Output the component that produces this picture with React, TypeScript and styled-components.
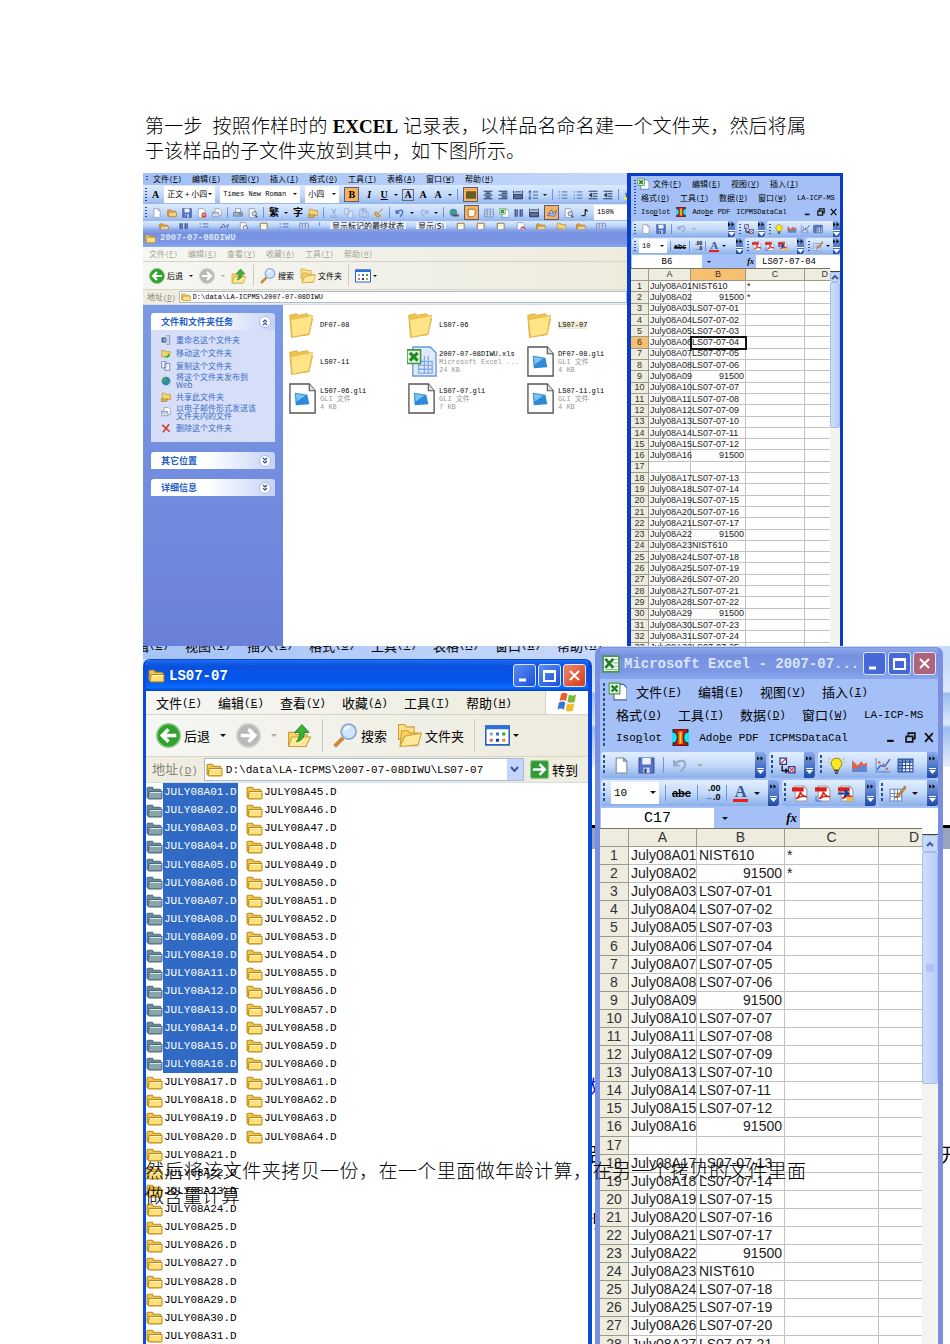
import React from "react";
import styled, { createGlobalStyle, css, ThemeProvider } from "styled-components";

const CJK = `"Noto Sans CJK SC", sans-serif`;
const MONO = `"Liberation Mono", "Noto Sans CJK SC", monospace`;
const SANS = `"Liberation Sans", "Noto Sans CJK SC", sans-serif`;

const small = {
  text: 8, mono: 7, item: 39, icon: 10, gap: 5, tightGap: 3, grip: 3, arrow: 2,
  title: 18, titleText: 9, menu: 15, bar: 28, address: 15, navIcon: 16, sheetMenu: 14,
  toolRow: 16, more: 7, formula: 13, nameBox: 70, nameText: 9, cell: 9, line: 9,
  head: 12, table: 386, cols: [18, 42, 55, 59], scroll: 10, thumb: 146, pad: 2, cellPad: 1,
};
const large = {
  text: 13, mono: 11, item: 62, icon: 17, gap: 8, tightGap: 6, grip: 5, arrow: 3,
  title: 31, titleText: 14, menu: 24, bar: 42, address: 26, navIcon: 25, sheetMenu: 23,
  toolRow: 26, more: 11, formula: 20, nameBox: 113, nameText: 15, cell: 14, line: 15,
  head: 18, table: 526, cols: [29, 68, 88, 94], scroll: 16, thumb: 232, pad: 3, cellPad: 2,
};
type Size = typeof small;
type T = { theme: any };
const px = (key: keyof Size) => ({ theme }: T) => `${theme[key]}px`;

const Global = createGlobalStyle`
  * { box-sizing: border-box; }
  body { margin: 0; background: #fff; color: #000; }
  button, input, select { font: inherit; color: inherit; margin: 0; padding: 0; border: 0; background: none; border-radius: 0; }
  button { display: flex; align-items: center; flex: none; white-space: nowrap; }
  svg { display: block; flex: none; }
`;

/* ---------- icons ---------- */

const folderShape = (a: string, b: string, line: string) => (
  <>
    <path d="M1 4q0-1 1-1h4l1 2h6q1 0 1 1v7H2q-1 0-1-1z" fill={a} stroke={line} />
    <path d="M3 7h12v6q0 1-1 1H3q-1 0-1-1z" fill={b} stroke={line} />
    <path d="M3.500 8h11" stroke="#fff" opacity=".7" />
  </>
);
const pdf = (extra: React.ReactNode) => (
  <>
    <path d="M3 1h8l3 3v11H3z" fill="#fff" stroke="#999" />
    <path d="M0 2h11v4H0z" fill="#d8201c" />
    <path d="M4 13c3-2 4-6 4-7 0 3 3 5 6 5-4-1-7 0-10 2z" fill="none" stroke="#d8201c" strokeWidth="1.500" />
    {extra}
  </>
);

const icons: Record<string, React.ReactNode> = {
  folder: folderShape("#f0c650", "#ffe07a", "#b98a18"),
  folderSel: folderShape("#6f8c94", "#8aa5a8", "#4a6b86"),
  bigFolder: (
    <>
      <path d="M1 2.500l4-1 1 1 5-1 1 1v2l2 0-2 9-10 1.500z" fill="#f0c44c" stroke="#d8a838" strokeWidth=".5" />
      <path d="M1.500 5l12.500-2.500-2 10.500-9.500 2z" fill="#ffe488" stroke="#e8b848" strokeWidth=".5" />
    </>
  ),
  gli: (
    <>
      <path d="M1 .5h10l3 3.500v11.500H1z" fill="#fff" stroke="#555" strokeWidth=".7" />
      <path d="M11 .5v3.500h3" fill="#ddd" stroke="#555" strokeWidth=".6" />
      <path d="M3.500 5l6.500 1 1 5-7 .5z" fill="#2e8ad8" /><path d="M4 5.500l5 1-4.500 3z" fill="#7cc3f5" />
    </>
  ),
  xlsFile: (
    <>
      <path d="M3 .5h9l3 3v12H3z" fill="#dfeafc" stroke="#6f95d8" strokeWidth=".7" />
      <path d="M6 8h7v6H6zM6 10h7M6 12h7M9 5v9M11 5v9" fill="none" stroke="#86a8e4" strokeWidth=".7" />
      <path d="M0 2h7v7H0z" fill="#e5f4e2" stroke="#3c9a3c" strokeWidth=".8" />
      <path d="M1.500 3.500l4 4M5.500 3.500l-4 4" stroke="#1f8a2a" strokeWidth="1.600" />
    </>
  ),
  excel: (
    <>
      <path d="M1 1h14v14H1z" fill="#f4fbf2" stroke="#4b9a4b" strokeWidth="1.500" />
      <path d="M10 4h4M10 7h4M10 10h4M3 13h11" stroke="#8ac48a" />
      <path d="M3 3.500l7 8M10 3.500l-7 8" stroke="#1f7f2c" strokeWidth="2.500" />
    </>
  ),
  book: (
    <>
      <path d="M5 2h8l3 3v10H5z" fill="#fff" stroke="#4a68a8" />
      <path d="M1 1h9v9H1z" fill="#e5f5e0" stroke="#4b9a4b" />
      <path d="M3 3l5 5M8 3L3 8" stroke="#1f7f2c" strokeWidth="2" />
    </>
  ),
  back: (
    <>
      <circle cx="8" cy="8" r="7.500" fill="#2fa32c" stroke="#8fc98a" />
      <path d="M13 8H4.500M8 4L4 8l4 4" fill="none" stroke="#fff" strokeWidth="2.200" />
    </>
  ),
  forward: (
    <>
      <circle cx="8" cy="8" r="7.500" fill="#b9b9b6" stroke="#d4d4d0" />
      <path d="M3 8h8.500M8 4l4 4-4 4" fill="none" stroke="#fff" strokeWidth="2.200" />
    </>
  ),
  up: (
    <>
      <path d="M1 6h4l1 1.500h7l-1 7.500H1z" fill="#f6d56c" stroke="#cf9f35" strokeWidth=".7" />
      <path d="M3 9h12l-3 6H1z" fill="#ffeaa0" stroke="#cf9f35" strokeWidth=".7" />
      <path d="M6 12c4-1 5-3 5-6h3L9.500 1 5 6h3c0 3-.5 4-2 6z" fill="#3ab235" stroke="#1f7f1f" strokeWidth=".6" />
    </>
  ),
  search: (
    <>
      <path d="M6.500 9.500L1 15" stroke="#c98a3c" strokeWidth="2.500" />
      <circle cx="10" cy="5.500" r="4.800" fill="#cfe5fb" stroke="#8fa9cf" strokeWidth="1.200" />
      <path d="M7.500 4.500q1-2 3-2" stroke="#fff" strokeWidth="1.300" fill="none" />
    </>
  ),
  folders: (
    <>
      <path d="M1 1h4l1 1.500h5v8H1z" fill="#fbe08a" stroke="#cf9f35" strokeWidth=".7" />
      <path d="M3 5h4l1 1.500h6l-1 8H2z" fill="#f6d060" stroke="#cf9f35" strokeWidth=".7" />
      <path d="M5 8.500l10.500-2-2 7.500L2 15z" fill="#ffeaa0" stroke="#cf9f35" strokeWidth=".7" />
    </>
  ),
  views: (
    <>
      <path d="M.5 2h15v12H.5z" fill="#fff" stroke="#2a62c0" />
      <path d="M0 1.500h16v2.500H0z" fill="#2f6fd8" />
      <path d="M3 6h2v2H3z" fill="#8fa8d8" /><path d="M7 6h2v2H7z" fill="#3a6fd0" /><path d="M11 6h2v2h-2z" fill="#3aa03a" />
      <path d="M3 10h2v2H3z" fill="#e06a6a" /><path d="M7 10h2v2H7z" fill="#203a90" /><path d="M11 10h2v2h-2z" fill="#c8983a" />
    </>
  ),
  go: (
    <>
      <rect x=".5" y=".5" width="15" height="15" rx="1.500" fill="#2f9a35" stroke="#8cc68c" />
      <path d="M2.500 8H12M8 3.500L12.500 8 8 12.500" fill="none" stroke="#fff" strokeWidth="2" />
    </>
  ),
  flag: (
    <>
      <path d="M3.500 2q2-1.500 4.500 0L7 7q-2.500-1.500-4.500 0z" fill="#e8602c" />
      <path d="M9 2.500q2.500 1.500 5 0L13 7.500q-2.500 1.500-5 0z" fill="#7cb83c" />
      <path d="M2 8q2.500-1.500 4.500 0l-1 5q-2.500-1.500-4.500 0z" fill="#3a78d8" />
      <path d="M7.700 8.500q2.500 1.500 5 0l-1 5q-2.500 1.500-5 0z" fill="#f2bc2c" />
    </>
  ),
  blank: <path d="M3 1h7l3 3v11H3zM10 1v3h3" fill="#fff" stroke="#7b86a0" />,
  open: folderShape("#e8a83c", "#f8cf72", "#a86c18"),
  save: (
    <>
      <path d="M1 1h14v14H1z" fill="#5572c4" stroke="#3a4f98" />
      <path d="M4 1h8v6H4z" fill="#eef3ff" /><path d="M5 10h6v5H5z" fill="#c9d3f0" /><path d="M6 11h2v4H6z" fill="#2c3f80" />
    </>
  ),
  perm: (
    <>
      <path d="M2 1h8l3 3v11H2z" fill="#fff" stroke="#7b86a0" /><circle cx="11" cy="11" r="4" fill="#d8403c" />
      <path d="M9 11h4" stroke="#fff" strokeWidth="1.500" />
    </>
  ),
  mail: (
    <>
      <path d="M5 1h7l3 3v8H5z" fill="#fff" stroke="#7b86a0" /><path d="M1 7h10v7H1z" fill="#e8ecf8" stroke="#6a7898" />
      <path d="M1 7l5 4 5-4" fill="none" stroke="#6a7898" />
    </>
  ),
  print: (
    <>
      <path d="M4 1h8v6H4z" fill="#fff" stroke="#6a7898" /><path d="M1 7h14v6H1z" fill="#a9b3cc" stroke="#55617f" />
      <path d="M9 10h4" stroke="#2fa32c" strokeWidth="2" />
    </>
  ),
  preview: (
    <>
      <path d="M2 1h8l2 3v11H2z" fill="#fff" stroke="#6a7898" /><circle cx="10" cy="9" r="3.500" fill="#cde" stroke="#445" />
      <path d="M12 12l3 3" stroke="#445" strokeWidth="2" />
    </>
  ),
  cut: <path d="M5 1l4 9M11 1L7 10M5 12a2 2 0 1 0 .1 0M11 12a2 2 0 1 0 .1 0" fill="none" stroke="#8fa5d0" strokeWidth="1.500" />,
  copyOff: <path d="M1 1h7v9H1zM6 5h8v10H6z" fill="#d4e2fa" stroke="#8fa5d0" />,
  copy: <path d="M1 1h7v10H1zM6 4h8v11H6z" fill="#f4f8ff" stroke="#3c5c9c" />,
  paste: <path d="M1 2h11v12H1zM6 6h9v9H6zM4 1h5v3H4z" fill="#c2d2f0" stroke="#8fa5d0" />,
  brush: <path d="M14 1L8 7M3 6l7 6-4 3-5-5z" fill="#e8b84c" stroke="#a87828" strokeWidth="1.500" />,
  highlight: <><path d="M0 11h16v5H0z" fill="#f8ec20" /><path d="M13 1L7 8M3 5l6 5-5 1z" fill="#eef" stroke="#334" strokeWidth="1.500" /></>,
  undo: <path d="M2 3v5h5M2.500 7.500C5 3 12 2 12.500 6.500 12.700 10 9 12 8 14" fill="none" stroke="#3a66c4" strokeWidth="2" />,
  undoOff: <path d="M2 3v5h5M2.500 7.500C5 3 12 2 12.500 6.500 12.700 10 9 12 8 14" fill="none" stroke="#9aa8c8" strokeWidth="2" />,
  redoOff: <path d="M14 3v5H9M13.500 7.500C11 3 4 2 3.500 6.500 3.300 10 7 12 8 14" fill="none" stroke="#9ab0dc" strokeWidth="2" />,
  globe: (
    <>
      <circle cx="7" cy="7" r="6" fill="#3c88c8" /><path d="M3 4q4-3 5 0t-2 5-3-1zM9 8l4-1-2 4z" fill="#49a848" />
      <path d="M7 12h8" stroke="#556" strokeWidth="3" strokeLinecap="round" />
    </>
  ),
  world: (
    <>
      <circle cx="8" cy="8" r="7" fill="#2f80c0" />
      <path d="M3 4q5-4 6 0t-3 5-3-1zM9 9l5-1-3 5z" fill="#49a848" />
    </>
  ),
  grid: <path d="M1 2h14v12H1zM1 5h14M1 8h14M1 11h14M5 2v12M10 2v12" fill="#fff" stroke="#4a6cb4" />,
  columns: <path d="M2 2v12M5 2v12M10 2v12M13 2v12" stroke="#445f96" strokeWidth="2.500" />,
  note: <path d="M10 2v9M10 2l4 3M4 12h6" stroke="#222" strokeWidth="2" />,
  draw: <path d="M1 12L7 3l3 5 5-4-3 9zM3 9h8" fill="#c8d8f8" stroke="#4a55a8" strokeWidth="1.300" />,
  page: <path d="M2 2h11v8l-3 4H2z" fill="#fff8e0" stroke="#86622a" strokeWidth="1.300" />,
  justify: <path d="M0 2h16v12H0z" fill="#6a5a24" />,
  center: <path d="M1 2h14M4 5h8M1 8h14M4 11h8M1 14h14" stroke="#22345c" strokeWidth="1.800" />,
  right: <path d="M1 2h14M6 5h9M1 8h14M6 11h9M1 14h14" stroke="#22345c" strokeWidth="1.800" />,
  spread: <path d="M1 1v5M15 1v5M3 3h10M1 7h14v7H1z" fill="#5a6c98" stroke="#22345c" strokeWidth="1.500" />,
  spacing: <path d="M3 1v14M1 4l2-3 2 3M1 12l2 3 2-3M8 3h8M8 8h8M8 13h8" fill="none" stroke="#3a5c9c" strokeWidth="1.500" />,
  list: <path d="M1 3h2M1 8h2M1 13h2M6 3h9M6 8h9M6 13h9" stroke="#4a6cb4" strokeWidth="1.500" />,
  indent: <path d="M1 2h14M8 6h7M8 10h7M1 14h14M6 5L2 8l4 3z" fill="#22345c" stroke="#22345c" strokeWidth="1.500" />,
  pdf1: pdf(null),
  pdf2: pdf(<path d="M1 10v5h5" fill="none" stroke="#3a7ad8" />),
  pdf3: pdf(<><path d="M0 8h8M6 5l4 3-4 3" stroke="#203a98" strokeWidth="2" fill="none" /><path d="M8 11h6v4H8z" fill="#f0b848" /></>),
  shapes: (
    <>
      <path d="M1 1h6v6H1zM9 9h6v6H9z" fill="#fff" stroke="#203a90" strokeWidth="1.200" />
      <path d="M1 7l6-6M9 9l6 6M15 9l-6 6" stroke="#d02840" /><path d="M3 8v5h5M6 11l2 2-2 2" fill="none" stroke="#111" strokeWidth="1.300" />
    </>
  ),
  bulb: (
    <>
      <path d="M8 1a5 5 0 0 1 3 9l-.5 2h-5L5 10a5 5 0 0 1 3-9z" fill="#ffe81c" stroke="#8a7410" strokeWidth=".8" />
      <path d="M6 13h4M6.500 15h3" stroke="#334" strokeWidth="1.500" /><path d="M0 5h1M15 5h1M1 1l1 1M15 1l-1 1" stroke="#b89818" />
    </>
  ),
  area: (
    <>
      <path d="M1 14V8l4 2 5-4 5 3v5z" fill="#5a88d8" /><path d="M1 10V3l5 5 4-4 2 3 3-2v4l-5-1-5 4z" fill="#e0604c" />
    </>
  ),
  plot: (
    <>
      <path d="M2 1v13h13" fill="none" stroke="#6a8cc8" /><path d="M3 12l3-4 4 1 5-7" fill="none" stroke="#3a66c4" strokeWidth="1.300" />
      <path d="M4 4h2v2H4zM8 6h2v2H8zM11 10h2v2h-2z" fill="#d85048" />
    </>
  ),
  cells: (
    <>
      <path d="M1 2h14v12H1z" fill="#f4f8ff" /><path d="M1 2h14v3H1zM1 5h4v9H1z" fill="#6f94dc" />
      <path d="M1 2h14v12H1zM1 5h14M1 8h14M1 11h14M5 2v12M8 2v12M12 2v12" fill="none" stroke="#2c4f9c" />
    </>
  ),
  edit: (
    <>
      <path d="M1 4h11v11H1zM1 8h11M1 11h11M5 4v11M8 4v11" fill="#fff" stroke="#6a88c0" />
      <path d="M15 1L8 9l-2 3 3-1 7-8z" fill="#d89848" stroke="#8a5a20" strokeWidth=".8" />
    </>
  ),
  isoplot: (
    <>
      <path d="M0 0h16v16H0z" fill="#1ce4f0" />
      <path d="M1 0h14v3h-2q-2 2-2 5t2 5h2v3H1v-3h2q2-2 2-5T3 3H1z" fill="#c01818" stroke="#111" strokeWidth=".8" />
      <path d="M6 2h4v12H6z" fill="#f08020" /><path d="M7.500 3h1v10h-1z" fill="#ffe820" />
    </>
  ),
  rename: <><path d="M1 4h7v8H1z" fill="#445878" /><path d="M9 1h5v14H9" fill="#c4d2ea" stroke="#6a7898" /><path d="M3 6h7v4H3z" fill="#88a8e0" /></>,
  move: <><path d="M1 4h5l1 2h8l-2 8H1z" fill="#f6d56c" stroke="#b08828" /><path d="M5 13l6-1V8l4 4-5 4z" fill="#3ab235" /></>,
  share: <><path d="M2 2h5l1 2h7v8H2z" fill="#f6d56c" stroke="#b08828" /><path d="M0 11h11l-2 4H0z" fill="#e8b848" stroke="#8a6a3a" /></>,
  remove: <path d="M2 3l12 11M13 2L3 15" stroke="#d03a30" strokeWidth="2.600" />,
};

const Icon = ({ name, size }: { name: string; size: number }) => (
  <svg width={size} height={size} viewBox="0 0 16 16" aria-hidden="true">{icons[name]}</svg>
);

/* ---------- shared small parts ---------- */

const Mono = styled.span`
  font: ${px("mono")} ${MONO};
  white-space: nowrap;
`;
const Grip = styled.i`
  flex: none;
  width: 2px;
  align-self: stretch;
  margin: 3px 0 3px 2px;
  background: repeating-linear-gradient(#2c4f96 0 ${({ theme }) => (theme.grip > 3 ? 3 : 1)}px, transparent 0 ${px("grip")});
`;
const Arrow = styled.i<{ $off?: boolean }>`
  flex: none;
  border: ${px("arrow")} solid transparent;
  border-top-color: ${(p) => (p.$off ? "#a8aaac" : "#111")};
  border-bottom: 0;
`;
const Rule = styled.i<{ $tall?: boolean }>`
  flex: none;
  width: 1px;
  height: ${(p) => (p.$tall ? "80%" : "60%")};
  background: ${(p) => (p.$tall ? "#cfccbc" : "#6f94d4")};
`;
const MenuEntry = styled.button<{ $auto?: boolean }>`
  width: ${({ theme, $auto }) => ($auto ? "auto" : `${theme.item}px`)};
  font: ${px("text")} ${CJK};
  line-height: 1;
`;
const Entry = ({ label, k }: { label: string; k: string }) => (
  <MenuEntry>{label}<Mono>(<u>{k}</u>)</Mono></MenuEntry>
);
const Tool = styled.button<{ $on?: boolean }>`
  justify-content: center;
  ${(p) => p.$on && css`
    width: 15px; height: 15px; background: #f6b35c; outline: 1px solid #5a5a80; outline-offset: -1px;
  `}
`;

/* ---------- window chrome ---------- */

const TitleBar = styled.div<{ $active?: boolean }>`
  display: flex;
  align-items: center;
  flex: none;
  gap: 2px;
  height: ${px("title")};
  padding: 0 2px;
  color: ${(p) => (p.$active ? "#fff" : "#dbe5fc")};
  background: ${(p) => p.$active
    ? "linear-gradient(#1c6cf0, #0a50dc 20%, #0458ee 70%, #0a6cff 88%, #0344c8)"
    : "linear-gradient(#8fa8ec, #7690e0 25%, #7c98e4 75%, #88a6f0)"};
`;
const Title = styled.h2`
  flex: 1;
  min-width: 0;
  margin: 0 0 0 2px;
  overflow: hidden;
  white-space: nowrap;
  font: bold ${px("titleText")} ${MONO};
`;
const ControlButton = styled.button<{ $tone: string }>`
  width: 23px;
  height: 23px;
  justify-content: center;
  border: 1px solid #dce6fc;
  border-radius: 3px;
  background: ${(p) => p.$tone};
`;
const Controls = ({ dim }: { dim?: boolean }) => {
  const blue = dim ? "#4668d8" : "linear-gradient(135deg,#5c8cf4,#1c50d8)";
  return (
    <>
      <ControlButton $tone={blue} aria-label="最小化"><svg width="15" height="15"><path d="M2 12h7" stroke="#fff" strokeWidth="3" /></svg></ControlButton>
      <ControlButton $tone={blue} aria-label="最大化"><svg width="15" height="15"><path d="M2 3h11v10H2z M2 4h11" fill="none" stroke="#fff" strokeWidth="2" /></svg></ControlButton>
      <ControlButton $tone={dim ? "#b0647c" : "linear-gradient(135deg,#f08868,#d03c1c)"} aria-label="关闭"><svg width="15" height="15"><path d="M3 3l9 9M12 3l-9 9" stroke="#fff" strokeWidth="2" /></svg></ControlButton>
    </>
  );
};

/* ---------- explorer ---------- */

const ExplorerMenu = styled.nav<{ $dim?: boolean }>`
  display: flex;
  flex: none;
  height: ${px("menu")};
  padding-left: ${({ theme }) => (theme.text > 8 ? 10 : 6)}px;
  color: ${(p) => (p.$dim ? "#a5a495" : "#000")};
  background: linear-gradient(90deg, #f6f6f4, #edebdc);
  border-bottom: 1px solid #d8d4c4;
`;
const FlagBox = styled.span`
  display: flex;
  align-items: center;
  justify-content: center;
  width: 43px;
  margin-left: auto;
  background: #fff;
  border-left: 1px solid #d8d4c4;
`;
const NavBar = styled.div`
  display: flex;
  align-items: center;
  flex: none;
  gap: ${({ theme }) => (theme.text > 8 ? 10 : 6)}px;
  height: ${px("bar")};
  padding-left: ${({ theme }) => (theme.text > 8 ? 10 : 6)}px;
  background: linear-gradient(90deg, #f6f6f4, #edebdc);
  border-bottom: 1px solid #d8d4c4;
`;
const NavButton = styled.button`
  gap: ${px("pad")};
  font: ${px("text")} ${CJK};
  line-height: 1;
`;
const AddressBar = styled.div<{ $dim?: boolean }>`
  display: flex;
  align-items: center;
  flex: none;
  height: ${px("address")};
  padding: 1px ${({ theme }) => (theme.text > 8 ? 10 : 0)}px 1px ${({ theme }) => (theme.text > 8 ? 6 : 4)}px;
  background: #efede0;
  border-bottom: 1px solid #d5dbe2;
  gap: ${({ theme }) => (theme.text > 8 ? 6 : 3)}px;
`;
const AddressLabel = styled.label`
  flex: none;
  color: #85857c;
  font: ${px("text")} ${CJK};
  line-height: 1;
`;
const AddressBox = styled.div`
  display: flex;
  align-items: center;
  flex: 1;
  min-width: 0;
  height: 100%;
  gap: ${px("pad")};
  padding-left: 1px;
  background: #fff;
  border: 1px solid #a8bcd8;
`;
const TextField = styled.input`
  flex: 1;
  min-width: 0;
  width: 0;
  font: ${px("mono")} ${MONO};
`;
const DropButton = styled.button`
  width: 16px;
  height: 100%;
  justify-content: center;
  background: #c4d4fc;
`;

const Nav = ({ t }: { t: Size }) => (
  <NavBar>
    <NavButton><Icon name="back" size={t.navIcon} />后退</NavButton>
    <Arrow />
    <NavButton aria-label="前进"><Icon name="forward" size={t.navIcon} /></NavButton>
    <Arrow $off />
    <NavButton aria-label="向上"><Icon name="up" size={t.navIcon} /></NavButton>
    <Rule $tall />
    <NavButton><Icon name="search" size={t.navIcon} />搜索</NavButton>
    <NavButton><Icon name="folders" size={t.navIcon} />文件夹</NavButton>
    <Rule $tall />
    <NavButton aria-label="查看"><Icon name="views" size={t.navIcon} /><Arrow /></NavButton>
  </NavBar>
);
const explorerMenu: [string, string][] = [["文件", "F"], ["编辑", "E"], ["查看", "V"], ["收藏", "A"], ["工具", "T"], ["帮助", "H"]];

/* ---------- Excel ---------- */

const SheetWindow = styled.section`
  display: flex;
  flex-direction: column;
  min-width: 0;
  background: #a4c0f6;
  overflow: hidden;
`;
const SheetMenus = styled.nav`
  display: flex;
  flex: none;
  padding: 1px 0 ${px("pad")} 1px;
`;
const SheetMenuRows = styled.div`
  flex: 1;
  min-width: 0;
  margin-left: ${({ theme }) => (theme.text > 8 ? 11 : 5)}px;
`;
const SheetMenuRow = styled.div<{ $spaced?: boolean }>`
  display: flex;
  align-items: center;
  height: ${px("sheetMenu")};
  gap: ${({ theme, $spaced }) => ($spaced ? (theme.text > 8 ? 10 : 6) : 0)}px;
`;
const BookMark = styled.span`
  width: ${({ theme }) => (theme.text > 8 ? 20 : 12)}px;
  margin-left: ${({ theme }) => (theme.text > 8 ? -8 : -4)}px;
  margin-right: ${({ theme }) => (theme.text > 8 ? 8 : 4)}px;
`;
const WindowMarks = styled.span`
  display: flex;
  gap: ${px("gap")};
  margin-left: auto;
  padding-right: ${px("pad")};
`;
const ToolRow = styled.div`
  display: flex;
  flex: none;
  gap: ${px("pad")};
  height: ${px("toolRow")};
  margin: 0 0 ${({ theme }) => (theme.text > 8 ? 2 : 1)}px 1px;
`;
const ToolGroup = styled.div<{ $w?: number; $tight?: boolean }>`
  display: flex;
  align-items: center;
  flex: ${(p) => (p.$w ? `0 0 ${p.$w}px` : "1")};
  min-width: 0;
  gap: ${({ theme, $tight }) => ($tight ? theme.tightGap : theme.gap)}px;
  border-radius: 3px;
  overflow: hidden;
  background: linear-gradient(#e2eefe, #c4daf9 50%, #88aeea);
`;
const MoreButton = styled.button`
  width: ${px("more")};
  height: 100%;
  margin-left: auto;
  flex-direction: column;
  justify-content: space-around;
  background: linear-gradient(#86aaec, #1e4aa4);
`;
const More = () => (
  <MoreButton aria-label="工具栏选项">
    <svg width="7" height="5" viewBox="0 0 8 5"><path d="M0 0l3 2.500L0 5zM4 0l3 2.500L4 5z" fill="#111" /></svg>
    <svg width="7" height="6" viewBox="0 0 7 6"><path d="M0 0h7v1H0zM0 2h7L3.500 6z" fill="#fff" /></svg>
  </MoreButton>
);
const SelectBox = styled.span<{ $w: number }>`
  display: flex;
  align-items: center;
  flex: 0 0 ${(p) => p.$w}px;
  height: 86%;
  padding: 0 3px;
  background: #fff;
  select { flex: 1; min-width: 0; width: 0; appearance: none; outline: 0; }
`;
const StrikeText = styled.s`
  font: bold ${px("mono")} ${SANS};
`;
const Decimal = styled.span`
  font: bold ${({ theme }) => (theme.text > 8 ? 9 : 5)}px/1 ${SANS};
  text-align: right;
  b { color: #2f66c8; }
`;
const RedA = styled.span`
  font: bold ${({ theme }) => (theme.text > 8 ? 17 : 11)}px "Liberation Serif", serif;
  color: #3a5c9c;
  border-bottom: ${px("pad")} solid #e82018;
  line-height: ${({ theme }) => (theme.text > 8 ? 15 : 9)}px;
  padding: 0 1px;
`;
const FormulaBar = styled.div`
  display: flex;
  align-items: center;
  flex: none;
  height: ${px("formula")};
  font: ${px("nameText")} ${MONO};
  padding-left: 1px;
  em { margin: 0 ${px("pad")} 0 auto; font: italic bold ${px("text")} "Liberation Serif", serif; }
`;
const NameBox = styled.input`
  width: ${px("nameBox")};
  height: 100%;
  margin-right: ${px("gap")};
  text-align: center;
  background: #fff;
`;
const FormulaInput = styled.input`
  flex: 0 0 ${({ theme }) => (theme.text > 8 ? 138 : 84)}px;
  min-width: 0;
  height: 100%;
  padding-left: ${({ theme }) => (theme.text > 8 ? 8 : 6)}px;
  background: #fff;
`;
const SheetBody = styled.div`
  display: flex;
  align-items: stretch;
  flex: 1;
  min-height: 0;
  overflow: hidden;
  background: #fff;
`;
const Grid = styled.table`
  flex: 1;
  width: 0;
  min-width: 0;
  height: ${px("table")};
  table-layout: fixed;
  border-collapse: separate;
  border-spacing: 0;
  border-top: 1px solid #77756a;
  color: #1c1c1c;
  font: ${px("cell")} ${SANS};
  line-height: ${px("line")};
  th, td { padding: 0; overflow: visible; white-space: nowrap; }
  td { padding: 0 ${px("cellPad")}; border: solid #c2c2c2; border-width: 0 1px 1px 0; }
  td:last-child { border-right: 0; }
  th:last-child { text-align: right; padding-right: ${px("pad")}; border-right: 0; }
  tbody th:first-child { text-align: center; }
`;
const Head = styled.th<{ $on?: boolean }>`
  height: ${px("head")};
  font-weight: normal;
  color: #333;
  background: ${(p) => (p.$on ? "#f6c070" : "#eeebdf")};
  border: solid #9b998a;
  border-width: 0 1px 1px 0;
`;
const RowHead = styled.td<{ $on?: boolean }>`
  && { padding: 0; border-color: #9b998a; }
  text-align: center;
  color: #333;
  background: ${(p) => (p.$on ? "#f6c070" : "#eeebdf")};
`;
const Value = styled.td<{ $number?: boolean; $on?: boolean }>`
  text-align: ${(p) => (p.$number ? "right" : "left")};
  ${(p) => p.$on && "outline: 2px solid #111; outline-offset: -1px;"}
`;
const Scroll = styled.div`
  flex: 0 0 ${px("scroll")};
  margin-top: ${px("tightGap")};
  border-top: 1px solid #444;
  background: #f4f4ee;
`;
const ScrollUp = styled.button`
  width: 100%;
  height: ${px("icon")};
  justify-content: center;
  border: 1px solid #a8bce8;
  border-radius: 2px;
  background: #c8d8fc;
`;
const Thumb = styled.div`
  display: flex;
  align-items: center;
  justify-content: center;
  height: ${px("thumb")};
  border: 1px solid #a8bce8;
  border-radius: 2px;
  background: linear-gradient(90deg, #d0defe, #bacdfb);
`;

const blanks = [17];
const standards = [2, 9, 16, 23, 30];
const glasses = [1, 24];
const makeRows = (count: number) => {
  let spot = 0;
  let sample = 0;
  return Array.from({ length: count }, (_, i) => {
    const n = i + 1;
    if (blanks.includes(n)) return { n, a: "", b: "", c: "" };
    spot += 1;
    const a = `July08A${String(spot).padStart(2, "0")}`;
    let b = "";
    if (standards.includes(n)) b = "91500";
    else if (glasses.includes(n)) b = "NIST610";
    else { sample += 1; b = `LS07-07-${String(sample).padStart(2, "0")}`; }
    return { n, a, b, c: n < 3 ? "*" : "" };
  });
};

const Excel = ({ t, cell, value, rows, selected }: { t: Size; cell: string; value: string; rows: number; selected?: number }) => {
  const lg = t === large;
  const s = t.icon;
  const mark = lg ? 11 : 8;
  return (
    <>
      <SheetMenus>
        <Grip />
        <SheetMenuRows>
          <SheetMenuRow>
            <BookMark><Icon name="book" size={lg ? 19 : 12} /></BookMark>
            <Entry label="文件" k="F" /><Entry label="编辑" k="E" /><Entry label="视图" k="V" /><Entry label="插入" k="I" />
          </SheetMenuRow>
          <SheetMenuRow>
            <Entry label="格式" k="O" /><Entry label="工具" k="T" /><Entry label="数据" k="D" /><Entry label="窗口" k="W" />
            <MenuEntry $auto><Mono>LA-ICP-MS</Mono></MenuEntry>
          </SheetMenuRow>
          <SheetMenuRow $spaced>
            <MenuEntry $auto><Mono>Iso<u>p</u>lot</Mono></MenuEntry>
            <Tool aria-label="Isoplot"><Icon name="isoplot" size={s} /></Tool>
            <MenuEntry $auto><Mono>Ado<u>b</u>e PDF</Mono></MenuEntry>
            <MenuEntry $auto><Mono>ICPMSDataCal</Mono></MenuEntry>
            <WindowMarks>
              <svg width={mark} height={mark} viewBox="0 0 10 10"><path d="M1 8h6" stroke="#111" strokeWidth="2" /></svg>
              <svg width={mark} height={mark} viewBox="0 0 10 10"><path d="M3 3V1h6v5H7M1 4h6v5H1z" fill="none" stroke="#111" strokeWidth="1.500" /></svg>
              <svg width={mark} height={mark} viewBox="0 0 10 10"><path d="M1 1l7 8M8 1L1 9" stroke="#111" strokeWidth="1.600" /></svg>
            </WindowMarks>
          </SheetMenuRow>
        </SheetMenuRows>
      </SheetMenus>
      <ToolRow>
        <ToolGroup $w={lg ? 165 : 103}>
          <Grip />
          <Tool aria-label="新建"><Icon name="blank" size={s} /></Tool>
          <Tool aria-label="保存"><Icon name="save" size={s} /></Tool>
          <Rule />
          <Tool aria-label="撤消"><Icon name="undoOff" size={s} /></Tool>
          <Arrow $off />
          <More />
        </ToolGroup>
        <ToolGroup $w={lg ? 46 : 28} $tight>
          <Grip /><Tool aria-label="绘图"><Icon name="shapes" size={s} /></Tool><More />
        </ToolGroup>
        <ToolGroup $tight>
          <Grip />
          {["bulb", "area", "plot", "cells"].map((n) => <Tool key={n} aria-label={n}><Icon name={n} size={s} /></Tool>)}
          <More />
        </ToolGroup>
      </ToolRow>
      <ToolRow>
        <ToolGroup $w={lg ? 178 : 111} $tight>
          <Grip />
          <SelectBox $w={lg ? 48 : 28}>
            <Mono as="select" aria-label="字号"><option>10</option></Mono><Arrow />
          </SelectBox>
          <Rule />
          <Tool aria-label="删除线"><StrikeText>abc</StrikeText></Tool>
          <Rule />
          <Tool aria-label="减少小数位数"><Decimal>.00<br /><b>→</b>.0</Decimal></Tool>
          <Rule />
          <Tool aria-label="字体颜色"><RedA>A</RedA></Tool>
          <Arrow />
          <More />
        </ToolGroup>
        <ToolGroup $w={lg ? 94 : 59} $tight>
          <Grip />
          {["pdf1", "pdf2", "pdf3"].map((n) => <Tool key={n} aria-label={n}><Icon name={n} size={s} /></Tool>)}
          <More />
        </ToolGroup>
        <ToolGroup $tight>
          <Grip /><Tool aria-label="编辑"><Icon name="edit" size={s} /></Tool><Arrow /><More />
        </ToolGroup>
      </ToolRow>
      <FormulaBar>
        <NameBox aria-label="名称框" defaultValue={cell} /><Arrow />
        <em>fx</em>
        <FormulaInput aria-label="编辑栏" defaultValue={value} />
      </FormulaBar>
      <SheetBody>
        <Grid>
          <colgroup>{t.cols.map((w, i) => <col key={i} width={w} />)}<col /></colgroup>
          <thead><tr>{["", "A", "B", "C", "D"].map((h) => <Head key={h} $on={!!selected && h === "B"}>{h}</Head>)}</tr></thead>
          <tbody>
            {makeRows(rows).map((r) => (
              <tr key={r.n}>
                <RowHead $on={r.n === selected}>{r.n}</RowHead>
                <Value>{r.a}</Value>
                <Value $number={r.b === "91500"} $on={r.n === selected}>{r.b}</Value>
                <Value>{r.c}</Value>
                <Value />
              </tr>
            ))}
          </tbody>
        </Grid>
        <Scroll>
          <ScrollUp aria-label="向上滚动"><svg width="8" height="6" viewBox="0 0 8 6"><path d="M1 5l3-3 3 3" fill="none" stroke="#445c98" strokeWidth="2" /></svg></ScrollUp>
          <Thumb>{lg && <svg width="8" height="8"><path d="M0 1h8M0 3h8M0 5h8M0 7h8" stroke="#9ab2ec" /></svg>}</Thumb>
        </Scroll>
      </SheetBody>
    </>
  );
};

/* ---------- first figure ---------- */

const Page = styled.main`
  display: flex;
  flex-direction: column;
  height: 100vh;
  padding: 114px 0 0 143px;
  overflow: hidden;
`;
const Paragraph = styled.p`
  margin: 0 144px 9px 2px;
  font: 300 19px/25px "Liberation Serif", ${CJK};
  text-align: justify;
  b { font-weight: 700; }
`;
const WideFigure = styled.figure`
  display: flex;
  flex: none;
  height: 473px;
  margin: 0 107px 0 0;
`;
const LeftPane = styled.div`
  display: flex;
  flex-direction: column;
  flex: 1;
  min-width: 0;
  overflow: hidden;
`;
const SmallSheet = styled(SheetWindow)`
  flex: 0 0 216px;
  border: solid #0a3cc8;
  border-width: 3px 3px 0 4px;
`;
const WordMenu = styled.nav`
  display: flex;
  flex: none;
  height: 12px;
  padding-left: 1px;
  gap: 5px;
  background: linear-gradient(90deg, #a2c0f6, #c4d8fa);
  div { display: flex; }
`;
const WordBar = styled.div<{ $h: number }>`
  display: flex;
  align-items: center;
  flex: none;
  gap: 5px;
  height: ${(p) => p.$h}px;
  font: 8px/1 ${CJK};
  background: linear-gradient(#dceafe, #c0d7f9 55%, #94b6ee);
  overflow: hidden;
`;
const Glyph = styled.span<{ $boxed?: boolean }>`
  width: 10px;
  text-align: center;
  font: bold 10px/10px "Liberation Serif", ${CJK};
  ${(p) => p.$boxed && "outline: 1px solid #667;"}
`;
const ClippedBar = styled(WordBar)`
  align-items: flex-start;
  padding: 1px 2px;
  gap: 10px;
  span { flex: none; white-space: nowrap; padding: 0 2px; background: #e8f0fd; }
`;
const ExplorerBody = styled.div`
  display: flex;
  flex: 1;
  min-height: 0;
  background: #fff;
`;
const TaskPane = styled.aside`
  display: flex;
  flex-direction: column;
  flex: 0 0 140px;
  gap: 10px;
  padding: 8px 8px 0;
  background: linear-gradient(#7b9ae6, #6a80d8);
`;
const TaskHead = styled.h3`
  display: flex;
  align-items: center;
  justify-content: space-between;
  height: 17px;
  margin: 0;
  padding: 0 4px 0 10px;
  color: #215dc6;
  font: bold 9px/1 ${CJK};
  border-radius: 3px 3px 0 0;
  background: linear-gradient(90deg, #fff 45%, #c6d3f7);
`;
const TaskList = styled.ul`
  display: flex;
  flex-direction: column;
  gap: 2px;
  margin: 0;
  padding: 4px 10px 9px;
  list-style: none;
  background: #d6dff7;
`;
const Task = styled.li`
  display: flex;
  align-items: center;
  gap: 5px;
  min-height: 11px;
  a { color: #3a6cc8; text-decoration: none; font: 8px/8px ${CJK}; white-space: nowrap; }
`;
const FileGrid = styled.ul`
  display: grid;
  grid-template-columns: repeat(3, 119px);
  grid-auto-rows: 37px;
  align-content: start;
  flex: 1;
  min-width: 0;
  margin: 0;
  padding: 1px 0 0 5px;
  list-style: none;
`;
const FileItem = styled.li<{ $on?: boolean }>`
  display: flex;
  align-items: center;
  font: 7px/8px ${MONO};
  white-space: nowrap;
  p { margin: 0; color: #999; }
  b { font-weight: normal; color: #000; background: ${(p) => (p.$on ? "#f0ecd8" : "none")}; }
`;
const FileIcon = styled.span`
  flex: 0 0 32px;
`;

const tasks: [string, React.ReactNode][] = [
  ["rename", "重命名这个文件夹"], ["move", "移动这个文件夹"], ["copy", "复制这个文件夹"],
  ["world", <>将这个文件夹发布到<br />Web</>], ["share", "共享此文件夹"],
  ["mail", <>以电子邮件形式发送该<br />文件夹内的文件</>], ["remove", "删除这个文件夹"],
];
const files: [string, string, string[]][] = [
  ["bigFolder", "DF07-08", []], ["bigFolder", "LS07-06", []], ["bigFolder", "LS07-07", []],
  ["bigFolder", "LS07-11", []], ["xlsFile", "2007-07-08DIWU.xls", ["Microsoft Excel ...", "24 KB"]],
  ["gli", "DF07-08.gli", ["GLI 文件", "4 KB"]], ["gli", "LS07-06.gli", ["GLI 文件", "4 KB"]],
  ["gli", "LS07-07.gli", ["GLI 文件", "7 KB"]], ["gli", "LS07-11.gli", ["GLI 文件", "4 KB"]],
];
const wordMenu: [string, string][] = [
  ["文件", "F"], ["编辑", "E"], ["视图", "V"], ["插入", "I"], ["格式", "O"], ["工具", "T"], ["表格", "A"], ["窗口", "W"], ["帮助", "H"],
];

const Chevron = ({ up }: { up?: boolean }) => (
  <svg width="12" height="12" viewBox="0 0 12 12">
    <circle cx="6" cy="6" r="5.500" fill="#fff" stroke="#a9b8e4" />
    <path d={up ? "M4 6l2-2 2 2M4 9l2-2 2 2" : "M4 3l2 2 2-2M4 6l2 2 2-2"} fill="none" stroke="#2c4a98" strokeWidth="1.200" />
  </svg>
);
const Tools = ({ names, on }: { names: string[]; on?: string }) => (
  <>
    {names.map((n, i) => n === "|" ? <Rule key={i} /> : n === "v" ? <Arrow key={i} /> :
      <Tool key={i} $on={n === on} aria-label={n}><Icon name={n} size={10} /></Tool>)}
  </>
);

const FirstFigure = () => (
  <ThemeProvider theme={small}>
    <WideFigure>
      <LeftPane>
        <WordMenu><Grip /><div>{wordMenu.map(([l, k]) => <Entry key={k} label={l} k={k} />)}</div></WordMenu>
        <WordBar $h={19}>
          <Grip />
          <Glyph>A</Glyph>
          <SelectBox $w={51}><select aria-label="样式"><option>正文 + 小四</option></select><Arrow /></SelectBox>
          <SelectBox $w={80}><Mono as="select" aria-label="字体"><option>Times New Roman</option></Mono><Arrow /></SelectBox>
          <SelectBox $w={34}><select aria-label="字号"><option>小四</option></select><Arrow /></SelectBox>
          <Tool $on><Glyph>B</Glyph></Tool>
          <Tool><Glyph><i>I</i></Glyph></Tool>
          <Tool><Glyph><u>U</u></Glyph></Tool>
          <Arrow />
          <Tool><Glyph $boxed>A</Glyph></Tool>
          <Tool><Glyph>A</Glyph></Tool>
          <Tool><Glyph>A</Glyph></Tool>
          <Tools names={["v", "|", "justify", "center", "right", "spread", "spacing", "v", "|", "list", "list", "indent", "indent", "|", "highlight"]} on="justify" />
        </WordBar>
        <WordBar $h={17}>
          <Grip />
          <Tools names={["blank", "open", "save", "perm", "mail", "|", "print", "preview", "|"]} />
          <Tool><Glyph>繁</Glyph></Tool>
          <Arrow />
          <Tool><Glyph>字</Glyph></Tool>
          <Tools names={["share", "|", "cut", "copyOff", "paste", "brush", "|", "undo", "v", "redoOff", "v", "|", "globe", "page"]} on="page" />
          <Tools names={["grid", "book", "columns", "spread", "draw", "preview", "note"]} on="draw" />
          <SelectBox $w={40}><Mono as="select" aria-label="显示比例"><option>150%</option></Mono><Arrow /></SelectBox>
        </WordBar>
        <ClippedBar $h={8}>
          <Grip />
          <Tools names={["open", "columns", "list", "draw", "preview", "page", "list", "grid"]} />
          <Rule />
          <span>显示标记的最终状态</span>
          <span>显示(S)</span>
          <Tools names={["page", "page", "page", "perm", "open", "share", "open", "grid"]} />
        </ClippedBar>
        <TitleBar><Icon name="folder" size={11} /><Title>2007-07-08DIWU</Title></TitleBar>
        <ExplorerMenu $dim>{explorerMenu.map(([l, k]) => <Entry key={k} label={l} k={k} />)}</ExplorerMenu>
        <Nav t={small} />
        <AddressBar>
          <AddressLabel htmlFor="addr-a">地址<Mono>(<u>D</u>)</Mono></AddressLabel>
          <AddressBox><Icon name="folder" size={10} /><TextField id="addr-a" defaultValue="D:\data\LA-ICPMS\2007-07-08DIWU" /></AddressBox>
        </AddressBar>
        <ExplorerBody>
          <TaskPane>
            <section>
              <TaskHead>文件和文件夹任务<Chevron up /></TaskHead>
              <TaskList>{tasks.map(([i, l]) => <Task key={i}><Icon name={i} size={10} /><a href="#task">{l}</a></Task>)}</TaskList>
            </section>
            <TaskHead>其它位置<Chevron /></TaskHead>
            <TaskHead>详细信息<Chevron /></TaskHead>
          </TaskPane>
          <FileGrid>
            {files.map(([i, n, info]) => (
              <FileItem key={n} $on={n === "LS07-07"}>
                <FileIcon><Icon name={i} size={i === "bigFolder" ? 28 : 31} /></FileIcon>
                <div><b>{n}</b>{info.map((x) => <p key={x}>{x}</p>)}</div>
              </FileItem>
            ))}
          </FileGrid>
        </ExplorerBody>
      </LeftPane>
      <SmallSheet>
        <Excel t={small} cell="B6" value="LS07-07-04" rows={33} selected={6} />
      </SmallSheet>
    </WideFigure>
  </ThemeProvider>
);

/* ---------- second figure ---------- */

const DesktopFigure = styled.figure`
  position: relative;
  flex: 1;
  min-height: 0;
  margin: 0;
  overflow: hidden;
`;
const WordBackdrop = styled.div`
  overflow: hidden;
  background: #fff;
`;
const BackdropMenu = styled.nav`
  display: flex;
  height: 28px;
  margin: -15px 0 0 -20px;
  background: linear-gradient(90deg, #a4c2f7, #c8dafa 60%);
`;
const BackdropBars = styled.div`
  height: 108px;
  background: linear-gradient(#c4d8fa, #dceafe 30%, #9cbcf0 32%, #dceafe 60%, #9cbcf0 64%, #e8eefa);
`;
const BackdropRuler = styled.div`
  height: 24px;
  margin-top: 58px;
  background: #98a4bc;
  border-top: 3px solid #000;
`;
const BackdropText = styled.p<{ $top: number; $link?: boolean }>`
  display: flex;
  justify-content: space-between;
  margin: ${(p) => p.$top}px -10px 0 438px;
  font: 19px/24px ${CJK};
  color: ${(p) => (p.$link ? "#0000e8" : "#000")};
`;
const ExplorerWindow = styled.section`
  position: absolute;
  top: 13px;
  bottom: 0;
  left: 0;
  display: flex;
  flex-direction: column;
  width: 449px;
  border: solid #0a4ad8;
  border-width: 1px 4px 0 3px;
  border-radius: 7px 7px 0 0;
  background: #fff;
  overflow: hidden;
`;
const LargeSheet = styled(SheetWindow)`
  position: absolute;
  top: 1px;
  bottom: 0;
  left: 452px;
  width: 348px;
  border: solid #7a8fe0;
  border-width: 1px 5px 0 5px;
  border-radius: 7px 7px 0 0;
`;
const NameList = styled.ul`
  display: grid;
  grid-template: repeat(31, 1fr) / 100px 100px;
  grid-auto-flow: column;
  flex: none;
  height: 562px;
  margin: 0;
  padding: 0;
  list-style: none;
`;
const NameItem = styled.li<{ $on?: boolean }>`
  display: flex;
  align-items: center;
  color: ${(p) => (p.$on ? "#fff" : "#000")};
  span { display: flex; align-items: center; height: 100%; padding: 0 1px; font: 11px ${MONO}; background: ${(p) => (p.$on ? "#316ac5" : "none")}; }
`;
const Overlay = styled(Paragraph)`
  position: absolute;
  top: 513px;
  left: 0;
  right: 0;
`;
const names = [...Array.from({ length: 31 }, (_, i) => i + 1), ...Array.from({ length: 20 }, (_, i) => i + 45)];

const SecondFigure = () => (
  <ThemeProvider theme={large}>
    <DesktopFigure>
      <WordBackdrop>
        <BackdropMenu>{wordMenu.slice(1).map(([l, k]) => <Entry key={k} label={l} k={k} />)}</BackdropMenu>
        <BackdropBars />
        <BackdropRuler />
        <BackdropText $top={225} $link><span>数</span></BackdropText>
        <BackdropText $top={44}><span>品</span><span>开</span></BackdropText>
        <BackdropText $top={42}><span>制</span></BackdropText>
      </WordBackdrop>
      <ExplorerWindow>
        <TitleBar $active><Icon name="folder" size={17} /><Title>LS07-07</Title><Controls /></TitleBar>
        <ExplorerMenu>
          {explorerMenu.map(([l, k]) => <Entry key={k} label={l} k={k} />)}
          <FlagBox><Icon name="flag" size={23} /></FlagBox>
        </ExplorerMenu>
        <Nav t={large} />
        <AddressBar>
          <AddressLabel htmlFor="addr-b">地址<Mono>(<u>D</u>)</Mono></AddressLabel>
          <AddressBox>
            <Icon name="folder" size={17} />
            <TextField id="addr-b" defaultValue="D:\data\LA-ICPMS\2007-07-08DIWU\LS07-07" />
            <DropButton aria-label="展开"><svg width="9" height="7"><path d="M1 1l3.500 4L8 1" fill="none" stroke="#3c5690" strokeWidth="2" /></svg></DropButton>
          </AddressBox>
          <NavButton><Icon name="go" size={19} />转到</NavButton>
        </AddressBar>
        <NameList>
          {names.map((n) => (
            <NameItem key={n} $on={n < 17}>
              <Icon name={n < 17 ? "folderSel" : "folder"} size={17} />
              <span>JULY08A{String(n).padStart(2, "0")}.D</span>
            </NameItem>
          ))}
        </NameList>
      </ExplorerWindow>
      <LargeSheet>
        <TitleBar><Icon name="excel" size={18} /><Title>Microsoft Excel - 2007-07...</Title><Controls dim /></TitleBar>
        <Excel t={large} cell="C17" value="" rows={28} />
      </LargeSheet>
      <Overlay>然后将该文件夹拷贝一份，在一个里面做年龄计算，在另一个拷贝的文件里面做含量计算</Overlay>
    </DesktopFigure>
  </ThemeProvider>
);

export default function App() {
  return (
    <Page>
      <Global />
      <Paragraph>第一步&nbsp; 按照作样时的 <b>EXCEL</b> 记录表，以样品名命名建一个文件夹，然后将属于该样品的子文件夹放到其中，如下图所示。</Paragraph>
      <FirstFigure />
      <SecondFigure />
    </Page>
  );
}
